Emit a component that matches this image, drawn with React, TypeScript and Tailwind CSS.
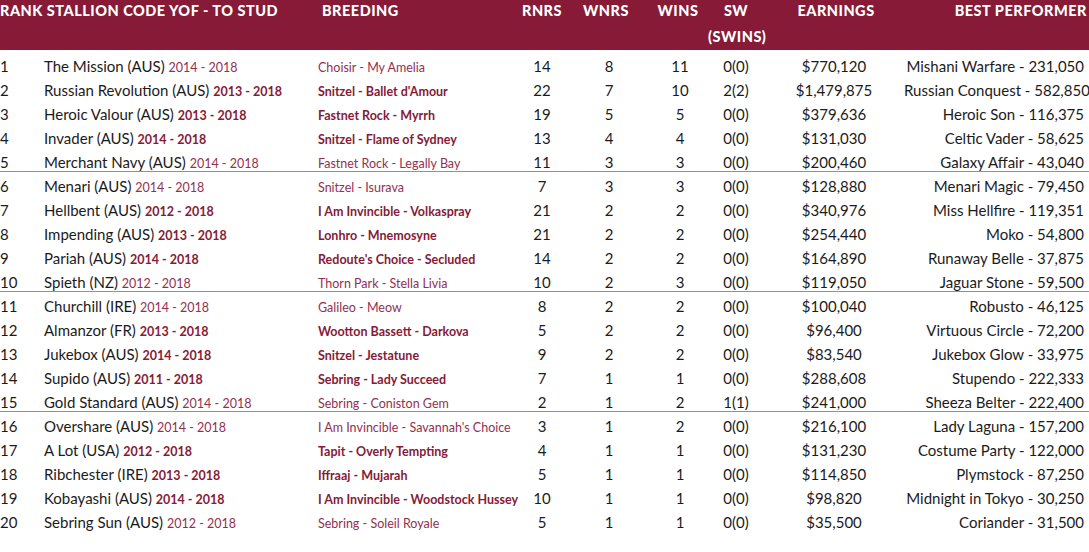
const rows = [
  ['1', 'The Mission (AUS)', '2014 - 2018', 'Choisir - My Amelia', '14', '8', '11', '0(0)', '$770,120', 'Mishani Warfare - 231,050', 0],
  ['2', 'Russian Revolution (AUS)', '2013 - 2018', "Snitzel - Ballet d'Amour", '22', '7', '10', '2(2)', '$1,479,875', 'Russian Conquest - 582,850', 1],
  ['3', 'Heroic Valour (AUS)', '2013 - 2018', 'Fastnet Rock - Myrrh', '19', '5', '5', '0(0)', '$379,636', 'Heroic Son - 116,375', 1],
  ['4', 'Invader (AUS)', '2014 - 2018', 'Snitzel - Flame of Sydney', '13', '4', '4', '0(0)', '$131,030', 'Celtic Vader - 58,625', 1],
  ['5', 'Merchant Navy (AUS)', '2014 - 2018', 'Fastnet Rock - Legally Bay', '11', '3', '3', '0(0)', '$200,460', 'Galaxy Affair - 43,040', 0],
  ['6', 'Menari (AUS)', '2014 - 2018', 'Snitzel - Isurava', '7', '3', '3', '0(0)', '$128,880', 'Menari Magic - 79,450', 0],
  ['7', 'Hellbent (AUS)', '2012 - 2018', 'I Am Invincible - Volkaspray', '21', '2', '2', '0(0)', '$340,976', 'Miss Hellfire - 119,351', 1],
  ['8', 'Impending (AUS)', '2013 - 2018', 'Lonhro - Mnemosyne', '21', '2', '2', '0(0)', '$254,440', 'Moko - 54,800', 1],
  ['9', 'Pariah (AUS)', '2014 - 2018', "Redoute's Choice - Secluded", '14', '2', '2', '0(0)', '$164,890', 'Runaway Belle - 37,875', 1],
  ['10', 'Spieth (NZ)', '2012 - 2018', 'Thorn Park - Stella Livia', '10', '2', '3', '0(0)', '$119,050', 'Jaguar Stone - 59,500', 0],
  ['11', 'Churchill (IRE)', '2014 - 2018', 'Galileo - Meow', '8', '2', '2', '0(0)', '$100,040', 'Robusto - 46,125', 0],
  ['12', 'Almanzor (FR)', '2013 - 2018', 'Wootton Bassett - Darkova', '5', '2', '2', '0(0)', '$96,400', 'Virtuous Circle - 72,200', 1],
  ['13', 'Jukebox (AUS)', '2014 - 2018', 'Snitzel - Jestatune', '9', '2', '2', '0(0)', '$83,540', 'Jukebox Glow - 33,975', 1],
  ['14', 'Supido (AUS)', '2011 - 2018', 'Sebring - Lady Succeed', '7', '1', '1', '0(0)', '$288,608', 'Stupendo - 222,333', 1],
  ['15', 'Gold Standard (AUS)', '2014 - 2018', 'Sebring - Coniston Gem', '2', '1', '2', '1(1)', '$241,000', 'Sheeza Belter - 222,400', 0],
  ['16', 'Overshare (AUS)', '2014 - 2018', "I Am Invincible - Savannah's Choice", '3', '1', '2', '0(0)', '$216,100', 'Lady Laguna - 157,200', 0],
  ['17', 'A Lot (USA)', '2012 - 2018', 'Tapit - Overly Tempting', '4', '1', '1', '0(0)', '$131,230', 'Costume Party - 122,000', 1],
  ['18', 'Ribchester (IRE)', '2013 - 2018', 'Iffraaj - Mujarah', '5', '1', '1', '0(0)', '$114,850', 'Plymstock - 87,250', 1],
  ['19', 'Kobayashi (AUS)', '2014 - 2018', 'I Am Invincible - Woodstock Hussey', '10', '1', '1', '0(0)', '$98,820', 'Midnight in Tokyo - 30,250', 1],
  ['20', 'Sebring Sun (AUS)', '2012 - 2018', 'Sebring - Soleil Royale', '5', '1', '1', '0(0)', '$35,500', 'Coriander - 31,500', 0],
] as const;

const cols = 'grid grid-cols-[44px_274px_200px_48px_86px_56px_56px_140px_1fr] pr-[5px]';

export default function App() {
  return (
    <div className="w-[1089px] h-[552px] bg-white font-['Lato',sans-serif] text-[#1b1b1b] overflow-hidden">
      <div className={`${cols} h-[50px] bg-[#861a37] text-white font-black text-[14.5px] tracking-[0.5px] uppercase leading-[26px]`}>
        <div className="col-span-2 -mt-[2px] whitespace-nowrap">Rank Stallion Code YOF - To Stud</div>
        <div className="-mt-[2px] pl-[4px]">Breeding</div>
        <div className="-mt-[2px] flex justify-center">RNRS</div>
        <div className="-mt-[2px] flex justify-center pr-[6px]">WNRS</div>
        <div className="-mt-[2px] flex justify-center pr-[4px]">WINS</div>
        <div className="-mt-[2px] text-center whitespace-nowrap">SW<br />(SWINS)</div>
        <div className="-mt-[2px] text-center pl-[4px]">Earnings</div>
        <div className="-mt-[2px] flex justify-end whitespace-nowrap -mr-[3px]">Best Performer</div>
      </div>
      <div className="pt-[4px]">
        {rows.map((r, i) => {
          const sep = i === 4 || i === 9 || i === 14;
          const strong = r[10] === 1;
          const accent = strong ? 'font-bold text-[#861a37]' : 'font-normal text-[#93304f]';
          return (
            <div
              key={r[0]}
              className={`${cols} items-baseline text-[15px] leading-[24px] ${sep ? 'h-[22px] mb-[2px] border-b border-[#c07b90]' : 'h-[24px]'}`}
            >
              <div>{r[0]}</div>
              <div className="whitespace-nowrap">
                {r[1]} <span className={`text-[12.5px] ${accent}`}>{r[2]}</span>
              </div>
              <div className={`whitespace-nowrap text-[12.5px] ${accent}`}>{r[3]}</div>
              <div className="text-center">{r[4]}</div>
              <div className="text-center">{r[5]}</div>
              <div className="text-center">{r[6]}</div>
              <div className="text-center">{r[7]}</div>
              <div className="text-center">{r[8]}</div>
              <div className="flex justify-end whitespace-nowrap">{r[9]}</div>
            </div>
          );
        })}
      </div>
    </div>
  );
}
